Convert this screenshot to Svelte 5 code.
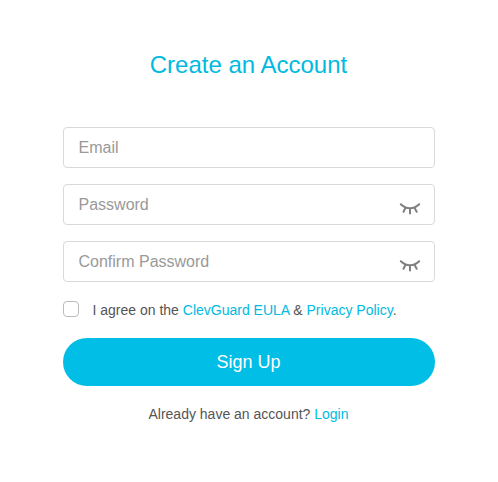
<script>
  let email = '';
  let password = '';
  let confirmPassword = '';
  let agreed = false;
</script>

<form class="signup" on:submit|preventDefault>
  <h1>Create an Account</h1>

  <div class="field">
    <input type="email" placeholder="Email" bind:value={email}>
  </div>
  <div class="field">
    <input type="password" placeholder="Password" bind:value={password}>
    <svg class="eye" width="20" height="12" viewBox="0 0 20 12" aria-hidden="true">
      <path d="M.8 1.3C6 6.5 14 6.5 19.2 1.3M10 5.5V10.4M5.4 5L3.5 8.8M14.6 5L16.7 8.8" />
    </svg>
  </div>
  <div class="field">
    <input type="password" placeholder="Confirm Password" bind:value={confirmPassword}>
    <svg class="eye" width="20" height="12" viewBox="0 0 20 12" aria-hidden="true">
      <path d="M.8 1.3C6 6.5 14 6.5 19.2 1.3M10 5.5V10.4M5.4 5L3.5 8.8M14.6 5L16.7 8.8" />
    </svg>
  </div>

  <label class="agree">
    <input type="checkbox" bind:checked={agreed}>
    <span>I agree on the <a href="#eula">ClevGuard EULA</a> &amp; <a href="#privacy">Privacy Policy</a>.</span>
  </label>

  <button type="submit">Sign Up</button>
  <p class="login">Already have an account? <a href="#login">Login</a></p>
</form>

<style>
  :global(body) {
    background: #fff;
  }

  .signup {
    box-sizing: border-box;
    width: 498px;
    height: 482px;
    padding: 50px 63px 0;
    font-family: "Liberation Sans", Arial, sans-serif;
    font-size: 14px;
    color: #555;
  }

  h1 {
    margin: 0 0 47px;
    padding-right: 1px;
    font-size: 24px;
    font-weight: 400;
    line-height: 30px;
    text-align: center;
    color: #00bae1;
  }

  .field {
    position: relative;
    height: 41px;
    margin-bottom: 16px;
  }

  .field input {
    box-sizing: border-box;
    width: 100%;
    height: 41px;
    padding: 0 50px 0 14.5px;
    border: 1px solid #d9d9d9;
    border-radius: 4px;
    outline: none;
    font: 16px "Liberation Sans", Arial, sans-serif;
    color: #333;
  }

  .field input::placeholder {
    color: #999;
    opacity: 1;
  }

  .eye {
    position: absolute;
    top: 19px;
    right: 15px;
    fill: none;
    stroke: #808080;
    stroke-width: 2;
    stroke-linecap: round;
    overflow: visible;
  }

  .agree {
    display: flex;
    align-items: center;
    height: 20px;
    margin-top: 18px;
  }

  .agree input {
    appearance: none;
    box-sizing: border-box;
    width: 16px;
    height: 16px;
    margin: 0 13.5px 2px 0;
    border: 1px solid #bbb;
    border-radius: 4px;
  }

  .agree input:checked {
    background: #00bee6;
  }

  a {
    color: #00bae1;
    text-decoration: none;
  }

  button {
    display: block;
    width: 100%;
    height: 48px;
    margin: 18px 0 0;
    padding: 0 1px 0 0;
    border: 0;
    border-radius: 24px;
    background: #00bee6;
    font: 18px "Liberation Sans", Arial, sans-serif;
    color: #fff;
  }

  .login {
    margin: 18px 0 0;
    padding-right: 1px;
    line-height: 20px;
    text-align: center;
  }
</style>
